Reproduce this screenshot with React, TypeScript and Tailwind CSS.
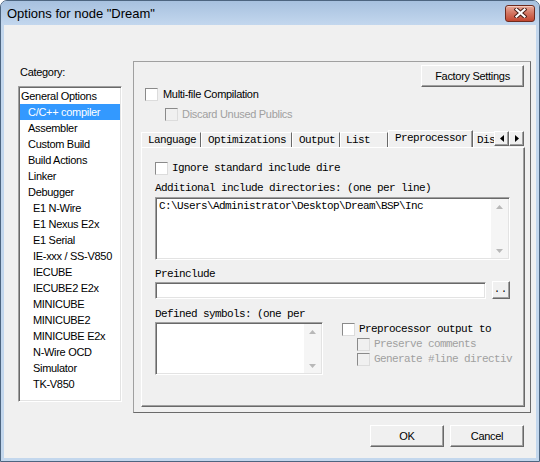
import React from "react";

const ui = "font-['Liberation_Sans',Arial,sans-serif] text-[11px] tracking-[-0.3px] text-black";
const mono = "font-['Liberation_Mono','Courier_New',monospace] text-[11px] leading-[13px] tracking-[-0.6px] whitespace-nowrap text-black";

const raised =
  "border border-t-white border-l-white border-r-[#696969] border-b-[#696969] shadow-[inset_-1px_-1px_0_#a0a0a0] bg-[#f0f0f0]";
const sunken =
  "border border-t-[#a0a0a0] border-l-[#a0a0a0] border-r-white border-b-white shadow-[inset_1px_1px_0_#696969,inset_-1px_-1px_0_#e3e3e3] bg-white p-[1px]";

const pads = ["pl-[1px]", "pl-[8px]", "pl-[13px]"];

const categories = [
  { label: "General Options", level: 0 },
  { label: "C/C++ compiler", level: 1, selected: true },
  { label: "Assembler", level: 1 },
  { label: "Custom Build", level: 1 },
  { label: "Build Actions", level: 1 },
  { label: "Linker", level: 1 },
  { label: "Debugger", level: 1 },
  { label: "E1 N-Wire", level: 2 },
  { label: "E1 Nexus E2x", level: 2 },
  { label: "E1 Serial", level: 2 },
  { label: "IE-xxx / SS-V850", level: 2 },
  { label: "IECUBE", level: 2 },
  { label: "IECUBE2 E2x", level: 2 },
  { label: "MINICUBE", level: 2 },
  { label: "MINICUBE2", level: 2 },
  { label: "MINICUBE E2x", level: 2 },
  { label: "N-Wire OCD", level: 2 },
  { label: "Simulator", level: 2 },
  { label: "TK-V850", level: 2 },
];

const tabs = [
  { label: "Language", w: "w-[60px]", pl: "pl-[6px]" },
  { label: "Optimizations", w: "w-[91px]", pl: "pl-[6px]" },
  { label: "Output", w: "w-[48px]", pl: "pl-[6px]" },
  { label: "List", w: "w-[48px]", pl: "pl-[5px]" },
];

function Box({ disabled }: { disabled?: boolean }) {
  return (
    <span
      className={`block h-[13px] w-[13px] shrink-0 border border-t-[#8a8a8a] border-l-[#8a8a8a] border-r-[#dcdcdc] border-b-[#dcdcdc] ${
        disabled ? "bg-[#f0f0f0]" : "bg-white"
      }`}
    />
  );
}

function VScroll() {
  return (
    <div className="flex w-[17px] shrink-0 flex-col items-center justify-between bg-[#f5f5f5] pt-[6px] pb-[5px]">
      <svg width="7" height="4" viewBox="0 0 7 4">
        <path d="M3.5 0L7 4H0Z" fill="#b8b8b8" />
      </svg>
      <svg width="7" height="4" viewBox="0 0 7 4">
        <path d="M0 0H7L3.5 4Z" fill="#b8b8b8" />
      </svg>
    </div>
  );
}

function CloseButton() {
  return (
    <div className="flex h-[17px] w-[30px] items-center justify-center rounded-[3px] border border-[#6e2b1f] bg-gradient-to-b from-[#e8a898] via-[#d2735f] to-[#c2452f] shadow-[inset_0_1px_0_#f3c9bd]">
      <svg width="13" height="10" viewBox="0 0 13 10">
        <path d="M2.5 1.5L10.5 8.5M10.5 1.5L2.5 8.5" stroke="#4a1f17" strokeWidth="4.2" strokeLinecap="square" />
        <path d="M2.5 1.5L10.5 8.5M10.5 1.5L2.5 8.5" stroke="#ffffff" strokeWidth="2.2" strokeLinecap="square" />
      </svg>
    </div>
  );
}

export default function App() {
  return (
    <div className="h-[462px] w-[540px] overflow-hidden bg-white">
      <div className={`flex h-full w-full flex-col rounded-t-[7px] border border-[#4d6580] bg-[#c3d7ed] ${ui}`}>
        {/* title bar */}
        <div className="flex h-[24px] shrink-0 items-center justify-between rounded-t-[6px] bg-gradient-to-b from-[#a7c1df] to-[#c3d7ee] pl-[6px] pr-[4px]">
          <span className="pt-[2px] text-[13px] tracking-normal">Options for node "Dream"</span>
          <CloseButton />
        </div>

        {/* client area */}
        <div className="mx-[3px] mb-[3px] flex flex-1 flex-col bg-[#f0f0f0]">
          <div className="flex pl-[14px] pt-[36px]">
            {/* category list */}
            <div className="w-[104px] pt-[5px]">
              <div className="h-[13px] pl-[2px] leading-[13px]">Category:</div>
              <div className={`mt-[7px] h-[316px] ${sunken}`}>
                {categories.map((c) => (
                  <div
                    key={c.label}
                    className={`flex h-[16px] items-center whitespace-nowrap ${pads[c.level]} ${
                      c.selected ? "bg-[#3399ff] text-white" : ""
                    }`}
                  >
                    {c.label}
                  </div>
                ))}
              </div>
            </div>

            {/* options panel */}
            <div className="ml-[11px] flex h-[352px] w-[398px] flex-col border border-t-[#a0a0a0] border-l-[#a0a0a0] border-r-[#6a6a6a] border-b-[#6a6a6a]">
              <div className="flex justify-end pr-[6px] pt-[3px]">
                <button type="button" className={`h-[22px] w-[103px] ${raised}`}>
                  Factory Settings
                </button>
              </div>

              <div className="mt-[1px] flex h-[13px] items-center gap-[5px] pl-[11px]">
                <Box />
                <span>Multi-file Compilation</span>
              </div>
              <div className="mt-[7px] flex h-[13px] items-center gap-[4px] pl-[31px]">
                <Box disabled />
                <span className="text-[#a0a0a0]">Discard Unused Publics</span>
              </div>

              {/* tab strip */}
              <div className={`ml-[7px] mt-[9px] flex h-[17px] w-[384px] items-end overflow-hidden ${mono}`}>
                {tabs.map((t) => (
                  <div
                    key={t.label}
                    className={`flex h-[15px] shrink-0 items-center border-l border-t border-l-white border-t-white border-r border-r-[#696969] ${t.w} ${t.pl}`}
                  >
                    {t.label}
                  </div>
                ))}
                <div className="relative top-[1px] z-10 flex h-[18px] w-[85px] shrink-0 items-start border-l border-t border-l-white border-t-white border-r border-r-[#696969] bg-[#f0f0f0] pl-[6px] pt-[1px] shadow-[inset_-1px_0_0_#a0a0a0]">
                  Preprocessor
                </div>
                <div className="flex h-[15px] w-[21px] shrink-0 items-center overflow-hidden border-l border-t border-l-white border-t-white pl-[3px]">
                  Dis
                </div>
                <div className="mb-[1px] flex shrink-0">
                  <div className={`flex h-[15px] w-[15px] items-center justify-center ${raised}`}>
                    <svg width="4" height="7" viewBox="0 0 4 7">
                      <path d="M4 0V7L0 3.5Z" fill="#000" />
                    </svg>
                  </div>
                  <div className={`flex h-[15px] w-[15px] items-center justify-center ${raised}`}>
                    <svg width="4" height="7" viewBox="0 0 4 7">
                      <path d="M0 0V7L4 3.5Z" fill="#000" />
                    </svg>
                  </div>
                </div>
              </div>

              {/* tab page */}
              <div
                className={`ml-[7px] flex h-[260px] w-[384px] flex-col border border-t-white border-l-white border-r-[#696969] border-b-[#696969] pl-[13px] shadow-[inset_-1px_-1px_0_#a0a0a0] ${mono}`}
              >
                <div className="mt-[14px] flex h-[13px] items-center gap-[4px]">
                  <Box />
                  <span className="block w-[171px] overflow-hidden">Ignore standard include dire</span>
                </div>
                <div className="mt-[7px] h-[13px]">Additional include directories: (one per line)</div>
                <div className={`mt-[2px] flex h-[63px] w-[355px] ${sunken}`}>
                  <div className="flex-1 pl-[2px] pt-[1px]">C:\Users\Administrator\Desktop\Dream\BSP\Inc</div>
                  <VScroll />
                </div>

                <div className="mt-[8px] h-[13px]">Preinclude</div>
                <div className="flex h-[18px] items-center gap-[6px]">
                  <div className={`h-[17px] w-[331px] ${sunken}`} />
                  <button type="button" className={`h-[18px] w-[18px] pb-[2px] text-[10px] tracking-[1px] ${raised}`}>
                    ..
                  </button>
                </div>

                <div className="mt-[9px] h-[13px]">Defined symbols: (one per</div>
                <div className="mt-[1px] flex">
                  <div className={`flex h-[53px] w-[168px] ${sunken}`}>
                    <div className="flex-1" />
                    <VScroll />
                  </div>
                  <div className="ml-[19px] flex flex-col pt-[1px]">
                    <div className="flex h-[13px] items-center gap-[4px]">
                      <Box />
                      <span>Preprocessor output to</span>
                    </div>
                    <div className="mt-[2px] flex h-[13px] items-center gap-[4px] pl-[15px]">
                      <Box disabled />
                      <span className="text-[#a0a0a0]">Preserve comments</span>
                    </div>
                    <div className="mt-[2px] flex h-[13px] items-center gap-[4px] pl-[15px]">
                      <Box disabled />
                      <span className="block w-[141px] overflow-hidden text-[#a0a0a0]">Generate #line directiv</span>
                    </div>
                  </div>
                </div>
              </div>
            </div>
          </div>

          {/* dialog buttons */}
          <div className="mt-[12px] flex justify-end gap-[6px] pr-[12px]">
            <button type="button" className={`h-[22px] w-[74px] ${raised}`}>
              OK
            </button>
            <button type="button" className={`h-[22px] w-[74px] ${raised}`}>
              Cancel
            </button>
          </div>
        </div>
      </div>
    </div>
  );
}
